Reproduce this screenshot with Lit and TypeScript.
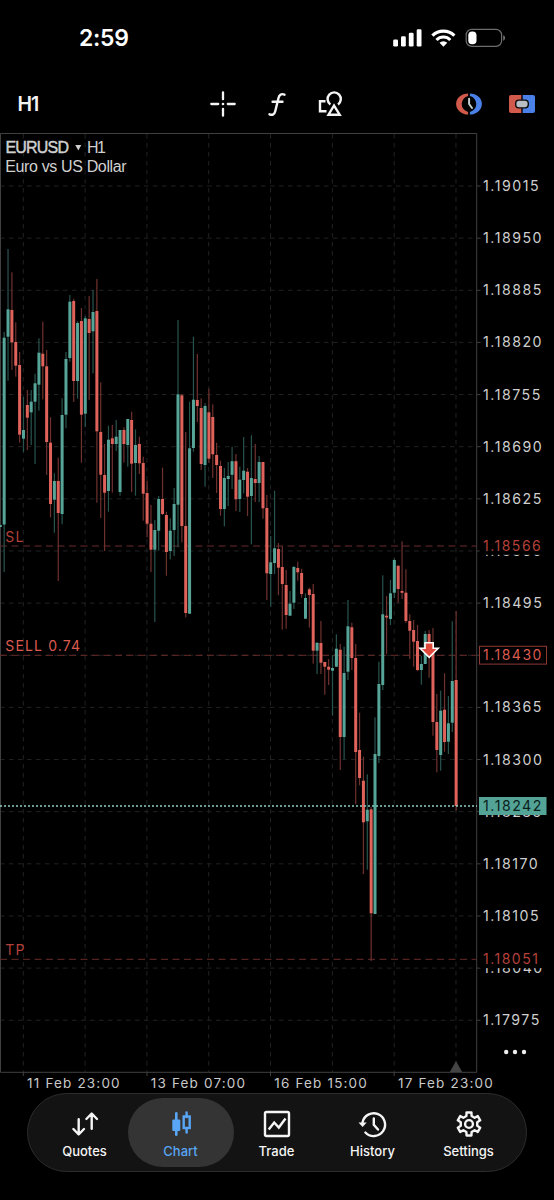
import { LitElement, html, svg, css } from "lit";
import { customElement, property } from "lit/decorators.js";

type Candle = [up: number, top: number, bottom: number, high: number, low: number];

const STEP = 3.863;
const ORIGIN = 0.3;

// One entry per hour: direction (1 = up), body top/bottom, wick top/bottom.
const CANDLES: Candle[] = [
  [1, 525, 527, 525, 527],
  [1, 337.7, 524.5, 332, 572],
  [1, 309.3, 336.7, 249, 380.7],
  [0, 310, 342.3, 272.3, 370],
  [0, 342, 365.7, 322.3, 376.7],
  [0, 365, 434.7, 352, 442.7],
  [1, 430, 438.7, 397, 452],
  [0, 405, 417.7, 390, 450],
  [1, 401.7, 412.3, 390, 445],
  [1, 383.3, 401.7, 373.7, 464],
  [1, 352.7, 384.7, 338.3, 410.7],
  [0, 353.7, 366.3, 321.7, 399.3],
  [0, 366.3, 442, 350, 475],
  [0, 442.7, 504, 417.3, 517.3],
  [1, 481, 499.7, 473.3, 532.7],
  [0, 481, 513, 457.7, 581],
  [1, 415, 514, 398.3, 524.3],
  [1, 359, 414.7, 352, 428.3],
  [1, 301.7, 358, 295, 361.7],
  [0, 301, 381, 298.7, 402],
  [1, 323, 381, 321.3, 398.7],
  [0, 321, 414.7, 308, 462.7],
  [1, 318.3, 413.7, 316, 427],
  [0, 319, 333, 296, 400],
  [1, 312, 331.3, 290, 373.3],
  [0, 311, 431.3, 279, 502.7],
  [0, 432, 474.7, 382.3, 518],
  [0, 475, 492.7, 444, 551],
  [1, 439.7, 491, 425.7, 511.7],
  [0, 438.3, 444, 425, 492.7],
  [1, 436.7, 444, 420, 451],
  [1, 430, 492, 430, 495.7],
  [0, 430, 444, 427.3, 462.5],
  [1, 419, 445, 419, 466.7],
  [0, 420, 463.7, 411.7, 492],
  [1, 445, 463, 429.3, 495.7],
  [0, 444, 463.3, 436.7, 474],
  [0, 463, 493.7, 456.7, 520.7],
  [0, 493, 523.7, 480.7, 537.3],
  [0, 523.7, 549.7, 505, 572],
  [1, 530, 549.7, 520, 622],
  [1, 499, 530.7, 496, 550.7],
  [0, 499, 514, 467.7, 515],
  [0, 515, 552, 511.7, 575.7],
  [1, 530.7, 551, 518.3, 559.3],
  [1, 504, 530, 488, 556],
  [1, 394.3, 504.7, 320, 547.3],
  [0, 395.3, 526, 394, 542.3],
  [0, 526, 613, 432, 617.3],
  [1, 448.3, 613.7, 401.7, 614],
  [1, 399.7, 448, 336.7, 451.7],
  [0, 400, 406, 354, 422],
  [0, 408, 464, 398.3, 470],
  [1, 406, 465, 403.3, 486.7],
  [0, 412.3, 458.7, 388.7, 463],
  [0, 417, 454.3, 404.3, 478],
  [0, 455, 465, 442.7, 493],
  [0, 466, 509, 460.7, 515.7],
  [1, 478, 509, 468, 526.3],
  [1, 475.9, 479, 462, 506],
  [1, 461.2, 474.8, 446.8, 489],
  [0, 461.2, 499.2, 454, 511],
  [1, 479.7, 499, 466.7, 512],
  [1, 470.7, 480, 437, 493.3],
  [0, 471.7, 496.7, 468, 516],
  [1, 478, 496, 435.3, 544.3],
  [0, 479, 483, 444, 502],
  [1, 462, 483, 456, 502],
  [0, 462, 508.3, 462, 518.7],
  [0, 508, 573.3, 495, 600],
  [1, 562.3, 574, 536, 606.7],
  [1, 548.3, 563, 490.7, 574],
  [0, 549, 567.7, 543, 595.3],
  [0, 567, 584, 546, 629.7],
  [0, 585, 615, 570, 628.7],
  [1, 603.7, 615.7, 591, 615.7],
  [1, 567, 602.7, 566, 609],
  [0, 568, 572.3, 561.7, 580.7],
  [0, 573, 594, 568.7, 597.7],
  [1, 598, 618.7, 593.3, 618.7],
  [0, 589.3, 595, 587.7, 627.7],
  [0, 594, 650.7, 584, 663.7],
  [1, 642.7, 650.7, 642.7, 674],
  [0, 643, 662.7, 621, 674],
  [0, 662, 666.7, 662, 694.7],
  [0, 666.7, 669.7, 659, 685],
  [1, 668, 670.7, 655, 715.7],
  [1, 648.7, 666.7, 634.3, 667],
  [0, 649.7, 737, 644, 770],
  [1, 673, 737, 646.7, 759.3],
  [1, 626.3, 671.7, 600, 680],
  [0, 627.3, 658, 622.7, 670],
  [0, 658, 752, 644, 804.3],
  [0, 750, 778, 712.7, 785.3],
  [0, 780.7, 822.3, 756.7, 874],
  [1, 809.7, 821.3, 774.3, 869.7],
  [0, 809.3, 913.3, 807, 961],
  [1, 754, 914, 717.3, 914],
  [1, 684, 756, 661.7, 763],
  [1, 614.3, 685, 575.3, 690],
  [0, 615.7, 617.5, 596, 654],
  [1, 593.3, 619, 580, 625],
  [1, 560, 592.7, 558.5, 598],
  [0, 565.7, 589, 565.7, 602.7],
  [0, 591, 592.8, 541.3, 599],
  [0, 592.7, 621, 569.3, 623],
  [0, 621, 630.7, 614.3, 659],
  [0, 630, 641.7, 620, 666.7],
  [0, 641, 670, 625, 671],
  [1, 664, 670, 656, 684.7],
  [1, 634, 664, 631, 664],
  [0, 634, 655, 630, 677.7],
  [0, 652, 722, 628, 735.7],
  [0, 722, 750, 694, 772.3],
  [1, 710.7, 755, 690.7, 770.7],
  [0, 709.7, 742, 673.3, 751.7],
  [1, 723.3, 741.7, 696, 754],
  [1, 681, 722.7, 621.3, 732],
  [0, 680, 806, 611, 810.7],
];

const PRICES = Array.from({ length: 17 }, (_, i) => ({
  label: (1.19015 - i * 0.00065).toFixed(5),
  y: 186 + i * 52.14,
}));

const DATES = [
  { label: "11 Feb 23:00", x: 23.3 },
  { label: "13 Feb 07:00", x: 147 },
  { label: "16 Feb 15:00", x: 270.5 },
  { label: "17 Feb 23:00", x: 394.2 },
];

@customElement("status-bar")
class StatusBar extends LitElement {
  static styles = css`
    :host {
      display: flex;
      height: 76px;
      box-sizing: border-box;
      padding: 0 48px 0 79px;
      align-items: center;
      justify-content: space-between;
    }
    .time {
      font: 600 23px/30px Inter, sans-serif;
      letter-spacing: -0.3px;
      color: #fff;
    }
    .icons {
      display: block;
    }
  `;
  render() {
    return html`
      <span class="time">2:59</span>
      <svg class="icons" width="114" height="20" viewBox="392 27.5 114 20" fill="#fff">
        <rect x="393.2" y="39" width="4.8" height="7" rx="1.3" />
        <rect x="401" y="35.7" width="4.8" height="10.3" rx="1.3" />
        <rect x="408.8" y="32.2" width="4.8" height="13.8" rx="1.3" />
        <rect x="416.7" y="28.7" width="4.8" height="17.3" rx="1.3" />
        <g fill="none" stroke="#fff" stroke-width="3.1">
          <path d="M432.4 35.2a15.4 15.4 0 0 1 22 0" />
          <path d="M436.5 39.5a9.6 9.6 0 0 1 13.8 0" />
        </g>
        <path d="M443.4 46.2l-3.9-3.9a5.6 5.6 0 0 1 7.8 0z" />
        <rect x="466.2" y="28.9" width="35.4" height="17" rx="5.6" fill="none" stroke="#6d6d6d" stroke-width="1.2" />
        <path d="M503.2 34.8c2.6.8 2.6 4.6 0 5.4z" fill="#6d6d6d" />
        <rect x="468.3" y="31" width="8.2" height="12.8" rx="3.8" />
      </svg>
    `;
  }
}

@customElement("chart-toolbar")
class ChartToolbar extends LitElement {
  static styles = css`
    :host {
      display: flex;
      height: 57px;
      box-sizing: border-box;
      padding: 0 18.5px 1px 17.5px;
      align-items: center;
    }
    .period {
      width: 190.5px;
      font: 600 19.5px/24px Inter, sans-serif;
      letter-spacing: -1px;
      color: #f4f4f4;
    }
    .group {
      display: flex;
      gap: 24px;
    }
    .push {
      margin-left: auto;
      gap: 25px;
    }
    svg {
      display: block;
    }
  `;
  render() {
    return html`
      <span class="period">H1</span>
      <div class="group">
        <svg width="30" height="30" viewBox="-15 -15 30 30" stroke="#f4f4f4" stroke-width="2.3" stroke-linecap="round">
          <path d="M-11.7 0H-4.8M4.8 0h6.9M0-11.7V-4.8M0 4.8v6.9" />
          <circle r="1.3" fill="#f4f4f4" stroke="none" />
        </svg>
        <svg width="30" height="30" viewBox="-15 -15 30 30" fill="none" stroke="#f4f4f4" stroke-width="2.4" stroke-linecap="round">
          <path d="M7.5-9.3C4-10.8 2.200-9 1.5-6L-1.700 7C-2.500 10.500-4.500 11.500-7.500 10.300M-4.400-2.200H5.5" />
        </svg>
        <svg width="30" height="30" viewBox="-15 -15 30 30" fill="none" stroke="#f4f4f4" stroke-width="2.4">
          <path d="M-5.5-2.8H-11V7.200H-4.500" />
          <path d="M-.6.4A6.600 6.600 0 1 1 7 .4" />
          <path d="M3 1.500L-2.500 10.700H8.700Z" />
        </svg>
      </div>
      <div class="group push">
        <svg width="28" height="28" viewBox="-14 -14 28 28">
          <path d="M-.9-10.500A12 10.500 0 0 0-.9 10.500V8A8.200 8.200 0 0 1-.9-8z" fill="#d25a4c" />
          <path d="M.9-10.500A12 10.500 0 0 1 .9 10.500V8A8.200 8.200 0 0 0 .9-8z" fill="#4a80e8" />
          <path d="M.1-5.200V0L3 4" fill="none" stroke="#c3cbcc" stroke-width="2" stroke-linecap="round" />
        </svg>
        <svg width="28" height="28" viewBox="-14 -14 28 28">
          <path d="M-.7-9H-11a2 2 0 0 0-2 2V7a2 2 0 0 0 2 2H-.700z" fill="#d25a4c" />
          <path d="M.7-9H11a2 2 0 0 1 2 2V7a2 2 0 0 1-2 2H.700z" fill="#4a80e8" />
          <rect x="-6.300" y="-3.900" width="12.600" height="7.800" rx="3.300" fill="#b9bec4" stroke="#0a0a0a" stroke-width="1.400" />
        </svg>
      </div>
    `;
  }
}

@customElement("price-chart")
class PriceChart extends LitElement {
  @property({ attribute: false }) candles: Candle[] = [];

  static styles = css`
    :host {
      display: block;
      height: 960px;
    }
    svg {
      display: block;
      font-family: Inter, sans-serif;
    }
    .grid {
      stroke: #202224;
      stroke-dasharray: 4.5 4.5;
      fill: none;
    }
    .frame {
      stroke: #404040;
      fill: none;
    }
    .axis {
      font-size: 14.2px;
      letter-spacing: 1.5px;
      fill: #cfcfcf;
    }
    .date {
      font-size: 13.5px;
      letter-spacing: 1.17px;
      fill: #c8c8c8;
    }
    .title {
      font-family: "Liberation Sans", sans-serif;
      font-size: 16px;
      fill: #d0d0d0;
    }
    .symbol {
      stroke: #d0d0d0;
      stroke-width: 0.45px;
    }
    .level {
      stroke: #6a2b2a;
      stroke-dasharray: 7 4.5;
    }
    .order {
      font-size: 14px;
      letter-spacing: 1.15px;
      fill: #b5403a;
    }
    .price {
      letter-spacing: 1.5px;
    }
    .sell {
      fill: #dc5a50;
    }
    .last {
      fill: #0b1f1c;
    }
    .up {
      fill: #56a598;
    }
    .down {
      fill: #df625b;
    }
    .wick-up {
      fill: #28544e;
    }
    .wick-down {
      fill: #6f312e;
    }
  `;

  candle(c: Candle, i: number) {
    const x = ORIGIN + i * STEP;
    const [up, top, bottom, high, low] = c;
    return svg`
      <rect class=${up ? "wick-up" : "wick-down"} x=${x - 0.6} y=${high} width="1.2" height=${low - high} />
      <rect class=${up ? "up" : "down"} x=${x - 1.5} y=${top} width="3" height=${bottom - top} />`;
  }

  level(y: number, name: string, price: string, sell = false) {
    return svg`
      <path class="level" d="M0 ${y}H476.5" />
      <text class="order ${sell ? "sell" : ""}" x="5.3" y=${y - 4}>${name}</text>
      <rect x="479.5" y=${y - 9} width="67" height="17.8" fill="#000" stroke=${sell ? "#8f3935" : "none"} />
      <text class="axis order price ${sell ? "sell" : ""}" x="483" y=${y + 5}>${price}</text>`;
  }

  render() {
    return html`
      <svg width="554" height="960" viewBox="0 133 554 960">
        <g class="grid">
          ${PRICES.map((p) => svg`<path d="M0 ${p.y}H476" />`)}
          ${Array.from({ length: 8 }, (_, i) => svg`<path d="M${23.3 + i * 61.81} 134V1072" />`)}
        </g>
        <path class="frame" d="M.5 133.5H476.7V1072.3H.5Z" />
        <g class="frame">
          ${PRICES.map((p) => svg`<path d="M477 ${p.y}h3.5" />`)}
          ${DATES.map((d) => svg`<path d="M${d.x} 1072v4" />`)}
        </g>
        <path d="M449.8 1072l6.2-11 6.2 11z" fill="#444" />
        <g>${PRICES.map((p) => svg`<text class="axis" x="483" y=${p.y + 5}>${p.label}</text>`)}</g>
        <g>${DATES.map((d) => svg`<text class="date" x=${d.x + 3.8} y="1088.3">${d.label}</text>`)}</g>
        ${this.level(546, "SL", "1.18566")}
        ${this.level(655.3, "SELL 0.74", "1.18430", true)}
        ${this.level(959.3, "TP", "1.18051")}
        <g>${this.candles.map((c, i) => this.candle(c, i))}</g>
        <path d="M0 806H477" stroke="#8fd0c4" stroke-width="1.5" stroke-dasharray="2 2" />
        <rect x="479" y="797" width="67.5" height="18" fill="#53a396" />
        <text class="axis last" x="483" y="811">1.18242</text>
        <path d="M425 642.8h8.2v5.4h5l-9 9.2-9.2-9.2h5z" fill="#e04a3c" stroke="#fff" stroke-width="1.6" />
        <text class="title symbol" x="5.5" y="152.6" textLength="63.5">EURUSD</text>
        <path d="M75.3 145h6l-3 5.4z" fill="#d0d0d0" />
        <text class="title" x="87" y="152.6" textLength="19">H1</text>
        <text class="title" x="5.2" y="171.7" textLength="121.5">Euro vs US Dollar</text>
        <g fill="#eee">
          <circle cx="506.2" cy="1052" r="2.2" />
          <circle cx="515" cy="1052" r="2.2" />
          <circle cx="524" cy="1052" r="2.2" />
        </g>
      </svg>
    `;
  }
}

const gear = (() => {
  const pts: string[] = [];
  for (let i = 0; i < 6; i++) {
    const at = (deg: number, r: number) => {
      const a = ((i * 60 + deg - 90) * Math.PI) / 180;
      return `${(r * Math.cos(a)).toFixed(2)} ${(r * Math.sin(a)).toFixed(2)}`;
    };
    pts.push(at(-12, 11.8), at(12, 11.8), at(18, 8.4), at(42, 8.4));
  }
  return "M" + pts.join("L") + "Z";
})();

@customElement("tab-bar")
class TabBar extends LitElement {
  static styles = css`
    :host {
      display: flex;
      width: 500px;
      height: 79px;
      box-sizing: border-box;
      margin: 0 auto;
      padding: 4px 9.5px 4px 8.5px;
      border: 1px solid #2c2c2c;
      border-radius: 40px;
      background: #131313;
    }
    .tab {
      flex: 1;
      display: flex;
      flex-direction: column;
      align-items: center;
      box-sizing: border-box;
      height: 69px;
      padding-top: 11px;
      color: #f5f5f5;
      font: 500 13px/18px Inter, sans-serif;
    }
    .active {
      flex: 0 0 106px;
      margin: 0 -5px;
      border-radius: 34.5px;
      background: #343434;
      color: #58a6f5;
    }
    svg {
      display: block;
      margin-bottom: 3px;
      fill: none;
      stroke: currentColor;
      stroke-width: 2.4px;
      overflow: visible;
    }
  `;
  tab(label: string, icon: unknown, active = false) {
    return html`<div class="tab ${active ? "active" : ""}">
      <svg width="30" height="30" viewBox="-15 -15 30 30">${icon}</svg>
      ${label}
    </div>`;
  }
  render() {
    return html`
      ${this.tab(
        "Quotes",
        svg`<path d="M-6.3-4.8V10.3M-11.6 5l5.3 5.5L-1 5M6.7 4.8V-10.3M1.4-5l5.3-5.5L12-5" stroke-linecap="round" stroke-linejoin="round" />`
      )}
      ${this.tab(
        "Chart",
        svg`<path d="M-4.7-10.800V10.800" stroke-width="2.600" stroke-linecap="round" />
          <rect x="-8.700" y="-4.500" width="8" height="11.500" rx="1" fill="currentColor" stroke="none" />
          <path d="M5.600-11.500V-7M5.600 4V8.500" stroke-width="2.400" stroke-linecap="round" />
          <rect x="2.700" y="-7.500" width="6" height="11.500" stroke-width="2.400" />`,
        true
      )}
      ${this.tab(
        "Trade",
        svg`<rect x="-12" y="-12" width="24" height="24" rx="1.500" /><path d="M-8.300 5.500L-2.800-1.500 1.800 3.500 8.500-5.500" />`
      )}
      ${this.tab(
        "History",
        svg`<path d="M-10.500-1.500A11.400 11.400 0 1 1-7.600 8.500" stroke-linecap="round" />
          <path d="M-14.500-1.500H-6.300L-10.400 3Z" fill="currentColor" stroke="none" />
          <path d="M.8-5.500V.8L5 5.500" stroke-linecap="round" />`
      )}
      ${this.tab(
        "Settings",
        svg`<path d=${gear} stroke-linejoin="round" /><circle r="3.900" />`
      )}
    `;
  }
}

@customElement("app-root")
class AppRoot extends LitElement {
  static styles = css`
    :host {
      display: flex;
      flex-direction: column;
      width: 554px;
      height: 1200px;
      background: #000;
      overflow: hidden;
    }
  `;
  render() {
    return html`
      <status-bar></status-bar>
      <chart-toolbar></chart-toolbar>
      <price-chart .candles=${CANDLES}></price-chart>
      <tab-bar></tab-bar>
    `;
  }
}
